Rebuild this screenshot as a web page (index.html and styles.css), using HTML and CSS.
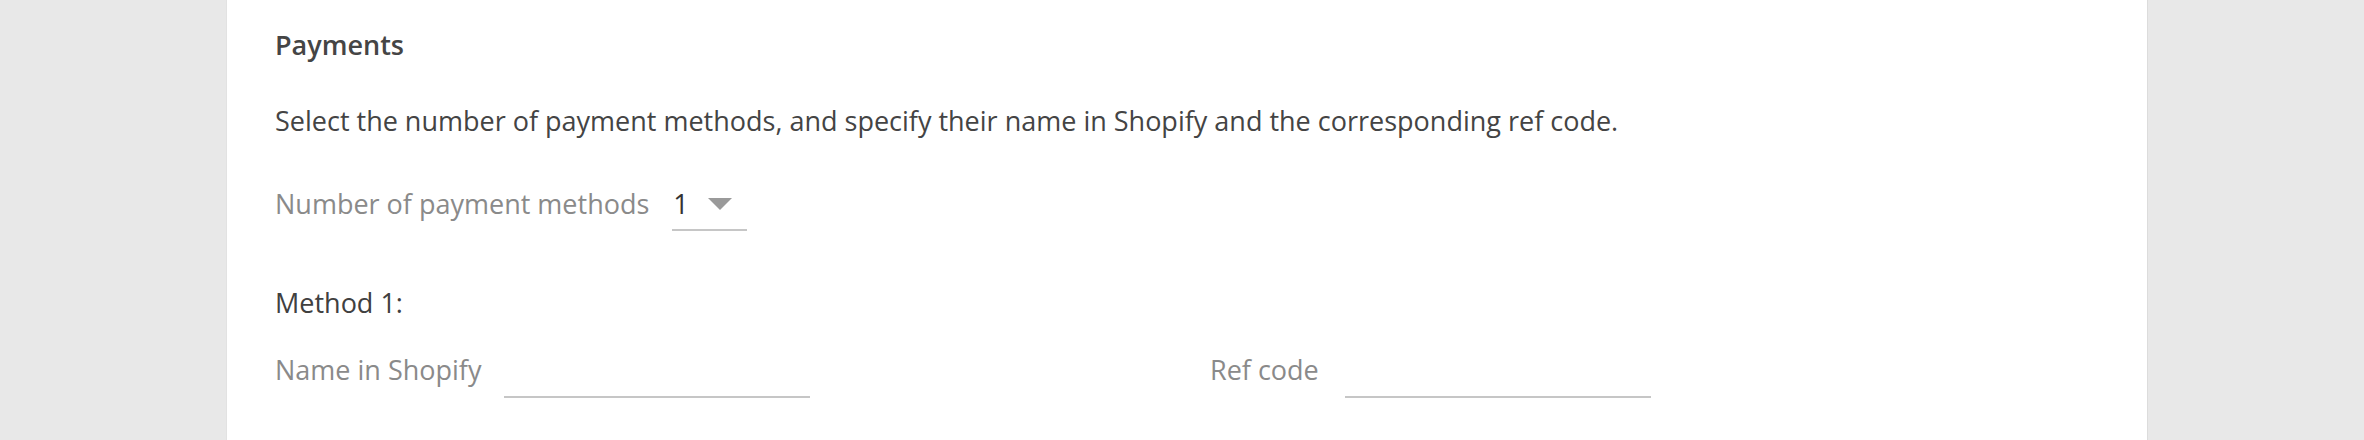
FILE: index.html
```html
<!DOCTYPE html>
<html lang="en">
<head>
<meta charset="utf-8">
<title>Payments</title>
<link rel="stylesheet" href="styles.css">
</head>
<body>
<div class="page">
  <section class="card">
    <h2 class="title">Payments</h2>
    <p class="desc">Select the number of payment methods, and specify their name in Shopify and the corresponding ref code.</p>
    <div class="count-row">
      <span class="label">Number of payment methods</span>
      <div class="select">
        <span class="select-value">1</span>
        <span class="caret"></span>
      </div>
    </div>
    <div class="method">
      <div class="method-title">Method 1:</div>
      <div class="fields">
        <div class="field">
          <span class="label">Name in Shopify</span>
          <span class="input"></span>
        </div>
        <div class="field">
          <span class="label">Ref code</span>
          <span class="input input-ref"></span>
        </div>
      </div>
    </div>
  </section>
</div>
</body>
</html>
```

FILE: styles.css
```css
html, body {
  margin: 0;
  padding: 0;
  height: 100%;
}
body {
  background: #e8e8e8;
  font-family: "Open Sans", "Noto Sans", sans-serif;
  font-size: 27px;
  line-height: 40px;
  color: #444444;
  overflow: hidden;
}
.page {
  height: 100%;
  padding-left: 226px;
}
.card {
  box-sizing: border-box;
  width: 1922px;
  height: 100%;
  background: #ffffff;
  border-left: 1px solid #e2e2e2;
  border-right: 1px solid #dcdcdc;
  padding: 25px 49px 0 48px;
}
.title {
  margin: 0;
  font-size: 27px;
  font-weight: 600;
  line-height: 40px;
  color: #454545;
}
.desc {
  margin: 36px 0 0 0;
  color: #444444;
}
.count-row {
  display: flex;
  align-items: baseline;
  margin-top: 43px;
}
.label {
  color: #8a8a8a;
  white-space: nowrap;
}
.select {
  display: flex;
  align-items: flex-start;
  width: 75px;
  margin-left: 23px;
  padding-bottom: 5px;
  border-bottom: 2px solid #c6c6c6;
}
.select-value {
  color: #333333;
  padding-left: 1px;
}
.caret {
  width: 0;
  height: 0;
  margin-top: 14px;
  margin-left: auto;
  margin-right: 15px;
  border-left: 12px solid transparent;
  border-right: 12px solid transparent;
  border-top: 12px solid #9a9a9a;
}
.method {
  margin-top: 52px;
}
.method-title {
  color: #404040;
}
.fields {
  display: grid;
  grid-template-columns: 935px 1fr;
  margin-top: 27px;
}
.field {
  display: flex;
  align-items: flex-start;
}
.input {
  display: block;
  width: 306px;
  height: 48px;
  margin-left: 23px;
  box-sizing: border-box;
  border-bottom: 2px solid #c6c6c6;
}
.input-ref {
  margin-left: 26px;
}
```
